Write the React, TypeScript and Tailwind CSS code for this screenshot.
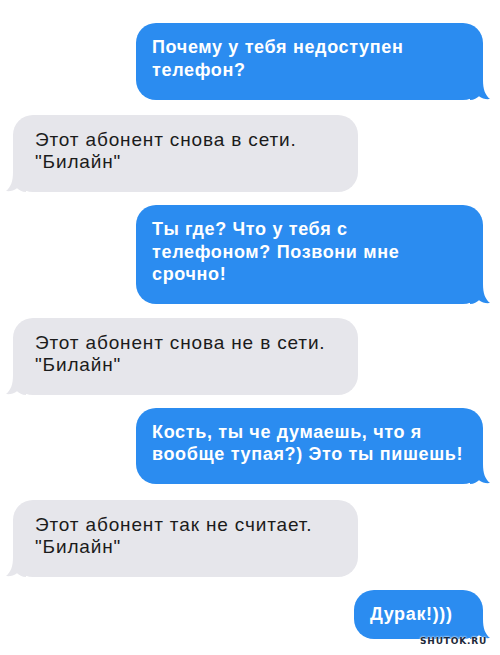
import type { ReactNode } from 'react';

type Msg = { from: 'me' | 'them'; lines: string[]; mt: string; w?: string; pb?: string };

const thread: Msg[] = [
  { from: 'me', lines: ['Почему у тебя недоступен', 'телефон?'], mt: 'mt-[23px]', pb: 'pb-[19px]' },
  { from: 'them', lines: ['Этот абонент снова в сети.', '"Билайн"'], mt: 'mt-[15px]' },
  { from: 'me', lines: ['Ты где? Что у тебя с', 'телефоном? Позвони мне', 'срочно!'], mt: 'mt-[13px]' },
  { from: 'them', lines: ['Этот абонент снова не в сети.', '"Билайн"'], mt: 'mt-[14px]' },
  { from: 'me', lines: ['Кость, ты че думаешь, что я', 'вообще тупая?) Это ты пишешь!'], mt: 'mt-[13px]' },
  { from: 'them', lines: ['Этот абонент так не считает.', '"Билайн"'], mt: 'mt-[16px]' },
  { from: 'me', lines: ['Дурак!)))'], mt: 'mt-[13px]', w: 'w-[129px]', pb: 'pb-[14px]' },
];

function Tail({ side, color }: { side: 'left' | 'right'; color: string }) {
  const pos = side === 'right' ? 'right-[-7px]' : 'left-[-7px] -scale-x-100';
  return (
    <svg className={`absolute bottom-0 ${pos}`} width="20" height="20" viewBox="0 0 20 20">
      <path d="M0 0 H13 C13 9 15 15 20 19 C16 19.6 12 18.4 9 16.2 C7 18 4 20 0 20 Z" fill={color} />
    </svg>
  );
}

function Bubble({ msg }: { msg: Msg }) {
  const mine = msg.from === 'me';
  const body: ReactNode = msg.lines.map((l) => (
    <span key={l} className="block whitespace-nowrap">
      {l}
    </span>
  ));

  if (mine) {
    return (
      <div className={`relative self-end mr-[17px] ${msg.mt} ${msg.w ?? 'w-[347px]'}`}>
        <div
          className={`rounded-[20px] bg-[#2b8cf0] pl-4 pr-3 pt-[13px] ${msg.pb ?? 'pb-[18px]'} text-[18px] leading-[22.5px] tracking-[0.65px] font-bold text-white`}
        >
          {body}
        </div>
        <Tail side="right" color="#2b8cf0" />
      </div>
    );
  }

  return (
    <div className={`relative self-start ml-[13px] w-[345px] ${msg.mt}`}>
      <div className="rounded-[20px] bg-[#e6e6eb] pl-[22px] pr-3 pt-[14px] pb-[19px] text-[19px] leading-[22px] tracking-[0.85px] text-[#1b1b1b]">
        {body}
      </div>
      <Tail side="left" color="#e6e6eb" />
    </div>
  );
}

export default function App() {
  return (
    <div className="relative w-[500px] h-[655px] overflow-hidden bg-white font-['Liberation_Sans',Arial,sans-serif]">
      <div className="flex flex-col">
        {thread.map((m, i) => (
          <Bubble key={i} msg={m} />
        ))}
      </div>
      <span className="absolute right-[13px] top-[635px] text-[9px] font-bold tracking-[0.8px] text-[#1d2a3a] font-['DejaVu_Sans',sans-serif] [text-shadow:0_0_2px_#fff,0_0_2px_#fff]">
        SHUTOK.RU
      </span>
    </div>
  );
}
